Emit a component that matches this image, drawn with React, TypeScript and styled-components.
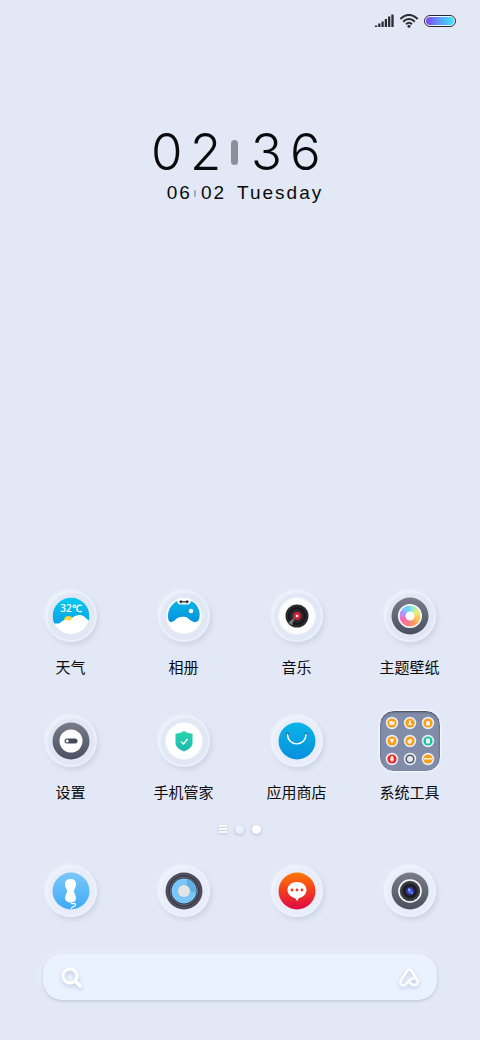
import React from 'react';
import styled, { createGlobalStyle } from 'styled-components';

const GlobalStyle = createGlobalStyle`
  * { box-sizing: border-box; }
  body {
    margin: 0;
    background: #e2e8f5;
    font-family: "Liberation Sans", "Noto Sans CJK SC", sans-serif;
    color: #0a0a0c;
  }
  button { border: 0; padding: 0; background: none; color: inherit; font: inherit; cursor: pointer; }
`;

const Screen = styled.main`
  display: flex;
  flex-direction: column;
  min-height: 100vh;
  padding-bottom: 40px;
  background: #e2e8f5;
`;

const StatusBar = styled.header`
  display: flex;
  justify-content: flex-end;
  align-items: center;
  gap: 5px;
  height: 42px;
  padding: 0 24px;
  svg { display: block; }
`;

const Battery = styled.span`
  width: 32px;
  height: 12px;
  border: 1px solid #26262c;
  border-radius: 6px;
  padding: 1px;
  background: #f3f6ff;
  &::before {
    content: "";
    display: block;
    height: 100%;
    border-radius: 4px;
    background: linear-gradient(90deg, #8142f5, #5f96f8 45%, #38e8fb);
  }
`;

const Clock = styled.section`
  display: flex;
  flex-direction: column;
  align-items: center;
  margin-top: 84px;
`;

const Time = styled.div`
  display: flex;
  align-items: center;
  gap: 13px;
  padding-right: 11px;
  font-family: Inter, "Liberation Sans", sans-serif;
  font-weight: 300;
  font-size: 51px;
  line-height: 52px;
`;

const Digits = styled.span`
  display: flex;
  gap: 11px;
  span { width: 28px; text-align: center; }
`;

const TimeBar = styled.i`
  width: 7px;
  height: 25px;
  border-radius: 4px;
  background: #8b8f98;
`;

const DateLine = styled.div`
  display: flex;
  align-items: center;
  padding-left: 10px;
  margin-top: 3px;
  font-size: 19px;
  line-height: 24px;
  letter-spacing: 2px;
`;

const DateBar = styled.i`
  width: 2px;
  height: 7px;
  margin: 0 5px 0 2px;
  border-radius: 1px;
  background: #a6abb8;
`;

const Weekday = styled.span`
  margin-left: 11px;
`;

const Grid = styled.nav`
  display: grid;
  grid-template-columns: repeat(4, 1fr);
  row-gap: 30px;
  padding: 0 14px;
`;

const Apps = styled(Grid)`
  margin-top: auto;
`;

const Dock = styled(Grid)`
  margin-top: 25px;
`;

const AppButton = styled.button`
  display: flex;
  flex-direction: column;
  align-items: center;
  gap: 9px;
`;

const Tile = styled.span`
  display: grid;
  place-items: center;
  width: 62px;
  height: 62px;
`;

const Ring = styled.span<{ $filled?: boolean }>`
  display: grid;
  place-items: center;
  width: 52px;
  height: 52px;
  border-radius: 50%;
  background: ${p => (p.$filled ? '#e9edf9' : '#e1e7f4')};
  box-shadow:
    inset 0 0 0 2px rgba(236, 241, 252, 0.8),
    inset 2px 2px 3px rgba(242, 246, 255, 0.9),
    2px 3px 4px rgba(178, 188, 212, 0.42),
    -1px -1px 3px rgba(240, 244, 254, 0.7);
  svg { display: block; overflow: visible; }
`;

const Label = styled.span`
  font-size: 15px;
  line-height: 24px;
  white-space: nowrap;
`;

const Folder = styled.span`
  display: grid;
  grid-template-columns: repeat(3, 14px);
  justify-content: center;
  align-content: center;
  gap: 4px;
  width: 62px;
  height: 62px;
  border: 1px solid #f3f6fd;
  border-radius: 15px;
  background: #808ca8;
  box-shadow: inset 0 1px 2px #414756, 0 0 2px #f4f7ff;
  svg { display: block; }
`;

const Pager = styled.div`
  display: flex;
  justify-content: center;
  align-items: center;
  gap: 8px;
  height: 12px;
  margin-top: 18px;
`;

const Dot = styled.button<{ $on?: boolean }>`
  width: 9px;
  height: 9px;
  border-radius: 50%;
  background: ${p => (p.$on ? '#ffffff' : '#e9effb')};
  box-shadow: 0 1px 3px rgba(130, 140, 165, 0.5);
`;

const Lines = styled.button`
  display: flex;
  flex-direction: column;
  gap: 1px;
  width: 8px;
  filter: drop-shadow(0 1px 1px rgba(130, 140, 165, 0.4));
  i { width: 8px; height: 2px; background: #f7faff; }
`;

const SearchBar = styled.form`
  display: flex;
  align-items: center;
  gap: 12px;
  height: 46px;
  margin: 32px 43px 0;
  padding: 0 16px;
  border-radius: 19px;
  background: #ebf2ff;
  box-shadow: 0 1px 3px rgba(168, 180, 208, 0.75), -2px -2px 5px rgba(240, 245, 255, 0.6);
  svg { display: block; overflow: visible; filter: drop-shadow(0 2px 2px rgba(140, 155, 190, 0.5)); }
`;

const SearchInput = styled.input`
  flex: 1;
  min-width: 0;
  height: 30px;
  border: 0;
  outline: 0;
  background: transparent;
  font: 15px "Liberation Sans", "Noto Sans CJK SC", sans-serif;
`;

const Disc = ({ children }: { children: React.ReactNode }) => (
  <svg width="38" height="38" viewBox="-19 -19 38 38" aria-hidden="true">
    <defs>
      <linearGradient id="slate" x2="0" y2="1"><stop stopColor="#7c7b89" /><stop offset=".55" stopColor="#5d6573" /><stop offset="1" stopColor="#4c4f60" /></linearGradient>
      <linearGradient id="sky" x2="0" y2="1"><stop stopColor="#06cbef" /><stop offset="1" stopColor="#0a92e2" /></linearGradient>
      <linearGradient id="store" x2="0" y2="1"><stop stopColor="#0ab5e8" /><stop offset="1" stopColor="#0590dc" /></linearGradient>
      <linearGradient id="phone" x2="0" y2="1"><stop stopColor="#7bc8f8" /><stop offset="1" stopColor="#3daaf6" /></linearGradient>
      <linearGradient id="fire" x2="0" y2="1"><stop stopColor="#ff7a00" /><stop offset=".55" stopColor="#f13524" /><stop offset="1" stopColor="#dc0a45" /></linearGradient>
      <linearGradient id="mint" x2="0" y2="1"><stop stopColor="#29d5ae" /><stop offset="1" stopColor="#1cb9ab" /></linearGradient>
      <radialGradient id="lens"><stop stopColor="#5b8fff" /><stop offset=".25" stopColor="#3743c4" /><stop offset=".42" stopColor="#29244f" /><stop offset=".55" stopColor="#17171b" /><stop offset="1" stopColor="#505255" /></radialGradient>
      <clipPath id="round"><circle r="18.5" /></clipPath>
    </defs>
    {children}
  </svg>
);

const Weather = () => (
  <Disc>
    <g clipPath="url(#round)">
      <circle r="18.5" fill="url(#sky)" />
      <circle cx="-2.5" cy="4.5" r="4.5" fill="#ffd238" />
      <path d="M-19 8C-16 7-13 8-11 7C-8 3-3 3-1 5C1 1 5-1 9-1C13-1 15 3 19 5V19H-19Z" fill="#fff" />
    </g>
    <text x="0" y="-4" textAnchor="middle" fontFamily="Open Sans, sans-serif" fontWeight="600" fontSize="10" fill="#fff">32℃</text>
  </Disc>
);

const Gallery = () => (
  <Disc>
    <circle r="18.2" fill="#fff" stroke="#dde3f0" strokeWidth=".6" />
    <path d="M-8-14.500C-13-11-16-6-16 0C-16 4-15 6-13 6C-9 6-8 1-3 1C2 0 3 1 6 4C9 6 12 7 14 5C16 3 16-3 15-6C13-11 11-13 8-14.500Z" fill="url(#store)" />
    <rect x="-6.500" y="-18" width="13" height="6.500" rx="3" fill="#fff" />
    <path d="M-3-14.200H3" stroke="#222" strokeWidth="1.200" />
    <path d="M-5-14.200L-2.500-16.200V-12.200ZM5-14.200L2.500-16.200V-12.200Z" fill="#222" />
    <circle cx="7" cy="-5" r="2.300" fill="#fff" />
  </Disc>
);

const Music = () => (
  <Disc>
    <circle r="18.5" fill="#fcfcfd" stroke="#eef0f5" strokeWidth=".5" />
    <circle r="11.500" fill="#29292b" />
    <circle r="8" fill="none" stroke="#161618" strokeWidth="2" />
    <circle r="4.200" fill="#c91f37" />
    <path d="M-2 1L-8 6C-8 8-6 9-5 9Z" fill="#77777a" />
    <circle r="1.300" fill="#fff" />
  </Disc>
);

const wheel = ['#9af0c0', '#e6ec7c', '#ffc45c', '#ff9a5e', '#ff7a80', '#fb6ab4', '#b492f6', '#6fd0f8'];
const Themes = () => (
  <Disc>
    <defs>
      <filter id="blend" x="-20%" y="-20%" width="140%" height="140%"><feGaussianBlur stdDeviation="1" /></filter>
      <clipPath id="wheelClip"><circle r="10.500" /></clipPath>
    </defs>
    <circle r="18.5" fill="url(#slate)" />
    <circle r="12" fill="#fff" />
    <g clipPath="url(#wheelClip)"><g filter="url(#blend)">
      {wheel.map((c, i) => <path key={c} d="M0 0L0-16L12-12Z" fill={c} stroke={c} transform={`rotate(${i * 45})`} />)}
    </g></g>
    <circle r="4.500" fill="#fff" />
  </Disc>
);

const Settings = () => (
  <Disc>
    <circle r="18.5" fill="url(#slate)" />
    <circle r="11.500" fill="#fff" />
    <rect x="-6.500" y="-2.500" width="13" height="5" rx="2.500" fill="#464b59" />
    <circle cx="-3.800" r="1.500" fill="#fff" />
  </Disc>
);

const Security = () => (
  <Disc>
    <circle r="18.5" fill="#fdfefe" stroke="#eef0f5" strokeWidth=".5" />
    <path d="M0-10C3-8 6-7.500 8.500-7.500V2C8.500 6 4 9 0 10.500C-4 9-8.500 6-8.500 2V-7.500C-6-7.500-3-8 0-10Z" fill="url(#mint)" />
    <path d="M-3 .5L-.5 3L3.500-2" fill="none" stroke="#fff" strokeWidth="1.300" />
  </Disc>
);

const Store = () => (
  <Disc>
    <circle r="18.5" fill="url(#store)" />
    <circle cx="-9.500" cy="-7" r="1.500" fill="#27608a" /><circle cx="9" cy="-7" r="1.500" fill="#27608a" />
    <path d="M-9.500-6.500C-9 6 8.500 6 9-6.500" fill="none" stroke="#fff" strokeWidth="1.400" strokeLinecap="round" />
  </Disc>
);

const Phone = () => (
  <Disc>
    <circle r="18.5" fill="url(#phone)" />
    <path d="M-.5-12C3-12 5-10 5-7C5-3 3-2 3 0C3 3 5 4 5 7C5 10 3 11.500-.5 11.500C-4 11.500-6 9-6 7C-6 4-4 3-4 0C-4-2-6-3-6-7C-6-10-4-12-.5-12Z" fill="#fff" />
    <path d="M0 12C2 14 5 11 4.500 14C4 16.500 1 14.500 0 18" fill="none" stroke="#fff" strokeWidth="1.200" />
  </Disc>
);

const Browser = () => (
  <Disc>
    <circle r="18.5" fill="#4e4d5d" />
    <circle r="15.500" fill="#373845" />
    <circle r="14" fill="none" stroke="#686776" strokeWidth="1" />
    <circle r="12.500" fill="#7ac6f8" />
    <path d="M3-12.200A12.500 12.500 0 0 1 12.300 2L5 0L3-5Z" fill="#62aee2" />
    <circle r="6" fill="#e3e4e6" />
  </Disc>
);

const Messages = () => (
  <Disc>
    <circle r="18.5" fill="url(#fire)" />
    <path d="M0-9C5.500-9 9.500-5.500 9.500-1C9.500 3 6 6.500 2 7L0 10L-2 7C-6 6.500-9.500 3-9.500-1C-9.500-5.500-5.500-9 0-9Z" fill="#fff" />
    <g fill="#e83a30"><circle cx="-5" cy="-1" r="1.400" /><circle cy="-1" r="1.400" /><circle cx="5" cy="-1" r="1.400" /></g>
  </Disc>
);

const Camera = () => (
  <Disc>
    <circle r="18.5" fill="url(#slate)" />
    <circle r="11.800" fill="#fff" />
    <circle r="10.300" fill="url(#lens)" />
    <circle cx="-1" cy="-1.500" r="1" fill="#9fc8ff" />
    <circle cx="2" cy="2" r="1" fill="#5ba1f7" />
  </Disc>
);

const tools: { c: string; d: string }[] = [
  { c: '#fb9e14', d: 'M-2.500-2H0L.5-1.500H2.500V2H-2.500Z' },
  { c: '#fb9e14', d: 'M-1-2.500H1V0L2.500 2H-2.500L-1 0Z' },
  { c: '#fb9e14', d: 'M-2-1L0-2.500L2-1V2.500H-2Z' },
  { c: '#fb9e14', d: 'M-2.500-1.500L0-2.500L2.500-1.500L0 2.500Z' },
  { c: '#fb9e14', d: 'M-2.500 0L0-2.500L2.500-1L1 2.500H-2Z' },
  { c: '#1fc1a0', d: 'M-2-2.500H2V2.500H-2Z' },
  { c: '#ea2a25', d: 'M-1-3H1L2 1L0 3L-2 1Z' },
  { c: '#555b6a', d: 'M-3 0A3 3 0 1 0 3 0A3 3 0 1 0-3 0Z' },
  { c: '#fb9e14', d: 'M-4-1H4V.5H-4Z' },
];

const Tools = () => (
  <Folder>
    {tools.map((t, i) => (
      <svg key={i} width="14" height="14" viewBox="-7 -7 14 14" aria-hidden="true">
        <circle r="6.200" fill="#e9edf7" /><circle r="4.600" fill={t.c} /><path d={t.d} fill="#fff" opacity=".85" />
      </svg>
    ))}
  </Folder>
);

const apps = [
  { name: '天气', Icon: Weather },
  { name: '相册', Icon: Gallery },
  { name: '音乐', Icon: Music },
  { name: '主题壁纸', Icon: Themes },
  { name: '设置', Icon: Settings },
  { name: '手机管家', Icon: Security },
  { name: '应用商店', Icon: Store, filled: true },
  { name: '系统工具', Icon: Tools, folder: true },
];

const dock = [
  { name: '电话', Icon: Phone },
  { name: '浏览器', Icon: Browser },
  { name: '短信', Icon: Messages },
  { name: '相机', Icon: Camera },
];

export default function App() {
  return (
    <Screen>
      <GlobalStyle />
      <StatusBar>
        <svg width="20" height="14" viewBox="0 0 20 14" aria-hidden="true">
          <path d="M2 11.500V13M5.300 9.500V13M8.600 7.500V13M11.900 5V13M15.200 2.500V13M18.500 .5V13" stroke="#2c2c31" strokeWidth="2.300" />
        </svg>
        <svg width="20" height="14" viewBox="-1 0 20 14" aria-hidden="true">
          <g fill="none" stroke="#2c2c31" strokeWidth="2"><path d="M.3 5C5.500-.5 12.500-.5 17.700 5" /><path d="M3.200 7.800C6.500 4.200 11.500 4.200 14.800 7.800" /><path d="M6 10.300C7.800 8.500 10.200 8.500 12 10.300" /></g>
          <circle cx="9" cy="12.300" r="1.500" fill="#2c2c31" />
        </svg>
        <Battery />
      </StatusBar>

      <Clock>
        <Time>
          <Digits><span>0</span><span>2</span></Digits>
          <TimeBar />
          <Digits><span>3</span><span>6</span></Digits>
        </Time>
        <DateLine>
          <span>06</span><DateBar /><span>02</span><Weekday>Tuesday</Weekday>
        </DateLine>
      </Clock>

      <Apps aria-label="应用">
        {apps.map(({ name, Icon, filled, folder }) => (
          <AppButton key={name}>
            <Tile>{folder ? <Icon /> : <Ring $filled={filled}><Icon /></Ring>}</Tile>
            <Label>{name}</Label>
          </AppButton>
        ))}
      </Apps>

      <Pager>
        <Lines aria-label="负一屏"><i /><i /><i /></Lines>
        <Dot aria-label="第一页" />
        <Dot aria-label="第二页" $on />
      </Pager>

      <Dock aria-label="常用应用">
        {dock.map(({ name, Icon }) => (
          <AppButton key={name} aria-label={name}>
            <Tile><Ring $filled><Icon /></Ring></Tile>
          </AppButton>
        ))}
      </Dock>

      <SearchBar role="search" onSubmit={e => e.preventDefault()}>
        <button aria-label="搜索">
          <svg width="24" height="24" viewBox="0 0 24 24"><circle cx="11" cy="11" r="7" fill="none" stroke="#fff" strokeWidth="3" /><path d="M16 16L21 21" stroke="#fff" strokeWidth="3.500" strokeLinecap="round" /></svg>
        </button>
        <SearchInput type="search" aria-label="搜索内容" />
        <button type="button" aria-label="语音助手">
          <svg width="24" height="24" viewBox="0 0 24 24"><path d="M19.500 13.800L15 6.500C13.500 4 11 4 9.500 6.500L3.500 16.500C2.500 20 6 21.500 8.500 19.500L13 15C15.500 13 18 12.500 20 14.500C22 17.500 20 20 17 20C14.500 20 13.500 18.500 11.500 16.500" fill="none" stroke="#fff" strokeWidth="2.400" strokeLinecap="round" strokeLinejoin="round" /></svg>
        </button>
      </SearchBar>
    </Screen>
  );
}
